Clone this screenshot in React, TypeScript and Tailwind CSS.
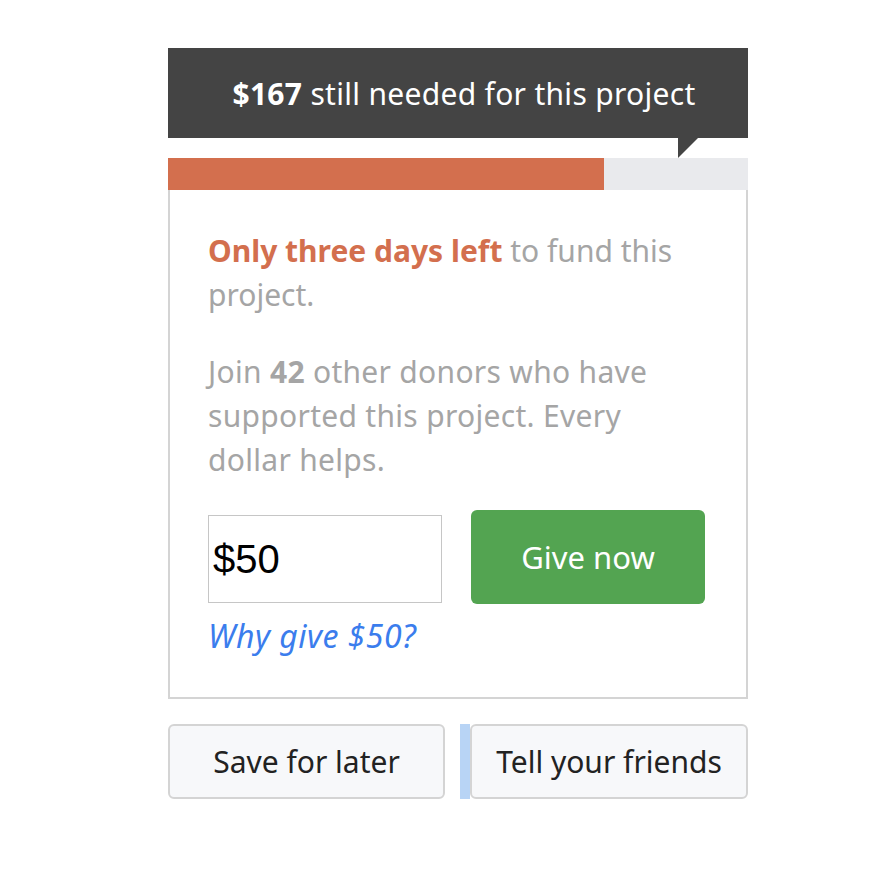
export default function App() {
  return (
    <div className="min-h-screen bg-white font-['Noto_Sans','Lato',sans-serif]">
      <div className="w-[580px] ml-[168px] pt-[48px]">
        <div className="relative bg-[#444444] h-[90px] flex items-center justify-center pl-3 text-white text-[30px] tracking-[0.3px]">
          <span>
            <span className="font-bold">$167</span> still needed for this project
          </span>
          <div className="absolute left-[510px] top-[90px] w-0 h-0 border-t-[20px] border-t-[#444444] border-r-[20px] border-r-transparent" />
        </div>
        <div className="mt-[20px] h-[32px] bg-[#e9eaed] flex">
          <div className="h-full w-[436px] bg-[#d36f4e]" />
        </div>
        <div className="border-2 border-t-0 border-[#d4d4d4] px-[38px] pt-[39px] pb-[39px] text-[30px] leading-[44px] text-[#a5a5a5]">
          <p>
            <span className="font-bold text-[#d36f4e]">Only three days left</span> to fund this
            <br />
            project.
          </p>
          <p className="mt-[33px] tracking-[0.3px]">
            Join <span className="font-bold">42</span> other donors who have
            <br />
            supported this project. Every
            <br />
            dollar helps.
          </p>
          <div className="mt-[28px] flex items-start gap-[29px]">
            <input
              defaultValue="$50"
              className="mt-[5px] w-[234px] h-[88px] border border-[#c6c6c6] px-1 text-[40px] text-black font-['Liberation_Sans',sans-serif] outline-none"
            />
            <button className="w-[234px] h-[94px] rounded-[6px] bg-[#53a451] text-white text-[31px]">
              Give now
            </button>
          </div>
          <a className="block mt-[10px] italic text-[#3b7ded] text-[32px] tracking-[0.5px] leading-[44px]">Why give $50?</a>
        </div>
        <div className="mt-[25px] flex items-stretch h-[75px]">
          <button className="w-[277px] rounded-[6px] border-2 border-[#d4d4d4] bg-[#f7f8fa] text-[30px] text-[#222]">
            Save for later
          </button>
          <div className="ml-[15px] w-[10px] bg-[#b8d4f5]" />
          <button className="w-[278px] rounded-[6px] border-2 border-[#d4d4d4] bg-[#f7f8fa] text-[30px] text-[#222]">
            Tell your friends
          </button>
        </div>
      </div>
    </div>
  )
}
